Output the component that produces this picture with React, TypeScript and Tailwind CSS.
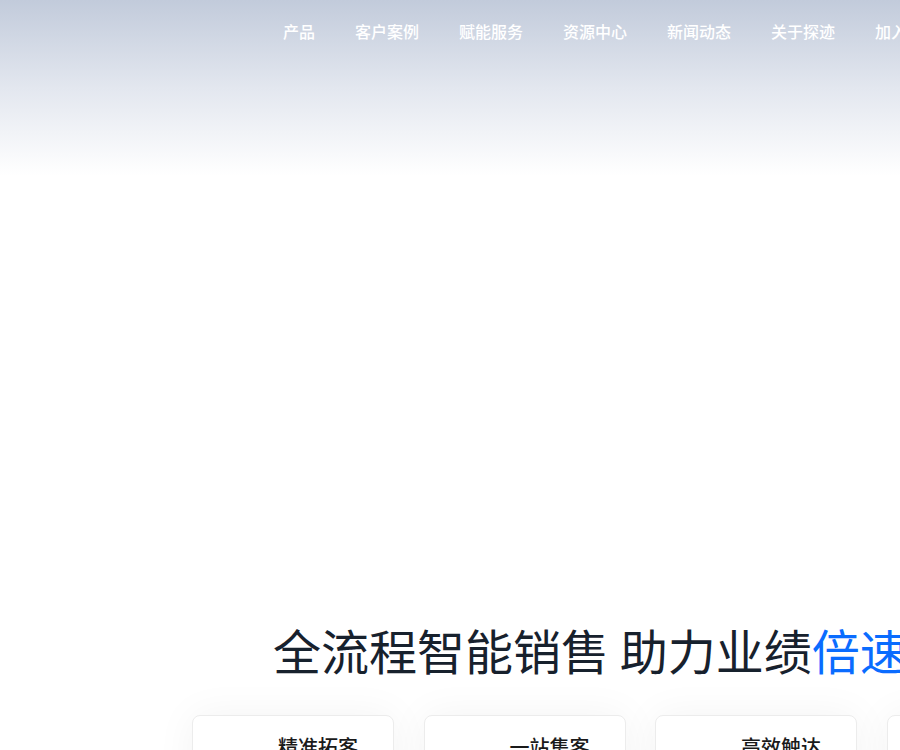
import React from "react";

const nav = ["产品", "客户案例", "赋能服务", "资源中心", "新闻动态", "关于探迹", "加入我们"];
const cards = ["精准拓客", "一站集客", "高效触达", "智能管理"];

export default function App() {
  return (
    <div
      className="relative w-[900px] h-[750px] overflow-hidden bg-white"
      style={{ fontFamily: '"Noto Sans CJK SC", "Noto Sans", sans-serif' }}
    >
      <div className="h-[176px] bg-gradient-to-b from-[#c2cbdb] via-[#e3e7ef] to-white">
        <nav className="flex gap-10 pl-[283px] pt-[19px] whitespace-nowrap">
          {nav.map((n) => (
            <span key={n} className="text-[16px] leading-[24px] font-medium text-white">
              {n}
            </span>
          ))}
        </nav>
      </div>
      <div className="h-[442px]" />
      <h1 className="pl-[273px] text-[48px] leading-[62px] text-[#17212d] whitespace-nowrap">
        全流程智能销售 助力业绩<span className="text-[#0a6cff]">倍速增长</span>
      </h1>
      <div className="flex gap-[29.5px] pl-[192px] mt-[35px]">
        {cards.map((c) => (
          <div
            key={c}
            className="shrink-0 w-[202px] h-[200px] rounded-[8px] border border-[#ececec] bg-white shadow-[0_0_40px_rgba(0,0,0,0.05)] pl-[85px] pt-[17px]"
          >
            <div className="text-[20px] leading-[28px] font-medium text-[#1a1a1a] whitespace-nowrap">{c}</div>
          </div>
        ))}
      </div>
    </div>
  );
}
